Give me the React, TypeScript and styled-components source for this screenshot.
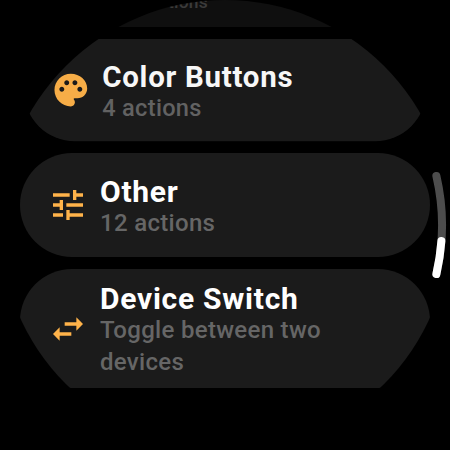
import React from "react";
import styled, { createGlobalStyle } from "styled-components";

const GlobalStyle = createGlobalStyle`
  html, body { margin: 0; background: #000; overflow: hidden; }
`;

const Watch = styled.main`
  position: relative;
  width: 450px;
  height: 450px;
  background: #000;
  overflow: hidden;
  clip-path: circle(225px at 50% 50%);
  font-family: Roboto, "Liberation Sans", sans-serif;
`;

const List = styled.div`
  display: flex;
  flex-direction: column;
  gap: 12px;
  margin: -77px 20px 0;
`;

const Card = styled.section<{ $scale?: number; $origin?: string; $opacity?: number; $tall?: boolean; $pull?: number }>`
  box-sizing: border-box;
  display: flex;
  flex: none;
  align-items: center;
  height: ${(p) => (p.$tall ? 119 : 104)}px;
  padding: 0 28px;
  gap: 12px;
  border-radius: 52px;
  background: #1b1b1b;
  transform: ${(p) => (p.$scale ? `scale(${p.$scale})` : "none")};
  transform-origin: ${(p) => p.$origin ?? "center"};
  opacity: ${(p) => p.$opacity ?? 1};
  margin-bottom: ${(p) => p.$pull ?? 0}px;
`;

const Icon = styled.svg`
  flex: none;
  width: 40px;
  height: 40px;
  fill: #ffb34a;
`;

const Labels = styled.div`
  display: flex;
  flex-direction: column;
  padding-top: 4px;
`;

const Title = styled.div`
  color: #fff;
  font-size: 30px;
  font-weight: 700;
  line-height: 31px;
  letter-spacing: 0.74px;
  white-space: nowrap;
`;

const Caption = styled.div`
  width: 250px;
  color: #666;
  font-size: 24px;
  font-weight: 500;
  line-height: 32px;
  letter-spacing: 0.31px;
`;

const ScrollIndicator = styled.svg`
  position: absolute;
  right: 0;
  top: 165px;
  width: 20px;
  height: 120px;
  fill: none;
  stroke-width: 8;
  stroke-linecap: round;
`;

const PALETTE =
  "M12 2C6.49 2 2 6.49 2 12s4.49 10 10 10c1.38 0 2.5-1.12 2.5-2.5 0-.61-.23-1.2-.64-1.67-.08-.1-.13-.21-.13-.33 0-.28.22-.5.5-.5H16c3.31 0 6-2.69 6-6C22 6.04 17.51 2 12 2zm5.5 11c-.83 0-1.5-.67-1.5-1.5s.67-1.5 1.5-1.5 1.5.67 1.5 1.5-.67 1.5-1.5 1.5zm-3-4c-.83 0-1.5-.67-1.5-1.5S13.67 6 14.5 6s1.5.67 1.5 1.5S15.33 9 14.5 9zM5 11.5c0-.83.67-1.5 1.5-1.5s1.5.67 1.5 1.5S7.33 13 6.5 13 5 12.33 5 11.5zm6-4c0 .83-.67 1.5-1.5 1.5S8 8.33 8 7.5 8.67 6 9.5 6s1.5.67 1.5 1.5z";
const TUNE =
  "M3 17v2h6v-2H3zM3 5v2h10V5H3zm10 16v-2h8v-2h-8v-2h-2v6h2zM7 9v2H3v2h4v2h2V9H7zm14 4v-2H11v2h10zm-6-4h2V7h4V5h-4V3h-2v6z";
const SWAP =
  "M6.99 11L3 15l3.99 4v-3H14v-2H6.99v-3zM21 9l-3.99-4v3H10v2h7.01v3L21 9z";

function Content({ path, title, caption }: { path?: string; title?: string; caption: string }) {
  return (
    <>
      <Icon viewBox="0 0 24 24">{path && <path d={path} />}</Icon>
      <Labels>
        <Title>{title ?? "\u00a0"}</Title>
        <Caption>{caption}</Caption>
      </Labels>
    </>
  );
}

export default function App() {
  return (
    <>
      <GlobalStyle />
      <Watch>
        <List>
          <Card $scale={0.725} $origin="bottom" $opacity={0.58}>
            <Content caption="4 actions" />
          </Card>
          <Card $scale={0.982} $origin="top" $opacity={0.97} $pull={-2}>
            <Content path={PALETTE} title="Color Buttons" caption="4 actions" />
          </Card>
          <Card>
            <Content path={TUNE} title="Other" caption="12 actions" />
          </Card>
          <Card $tall>
            <Content path={SWAP} title="Device Switch" caption="Toggle between two devices" />
          </Card>
        </List>
        <ScrollIndicator viewBox="430 165 20 120">
          <path d="M436.4 176A217 217 0 0 1 436.4 274" stroke="#4d4d4d" />
          <path d="M441.4 241A217 217 0 0 1 436.4 274" stroke="#fff" />
        </ScrollIndicator>
      </Watch>
    </>
  );
}
